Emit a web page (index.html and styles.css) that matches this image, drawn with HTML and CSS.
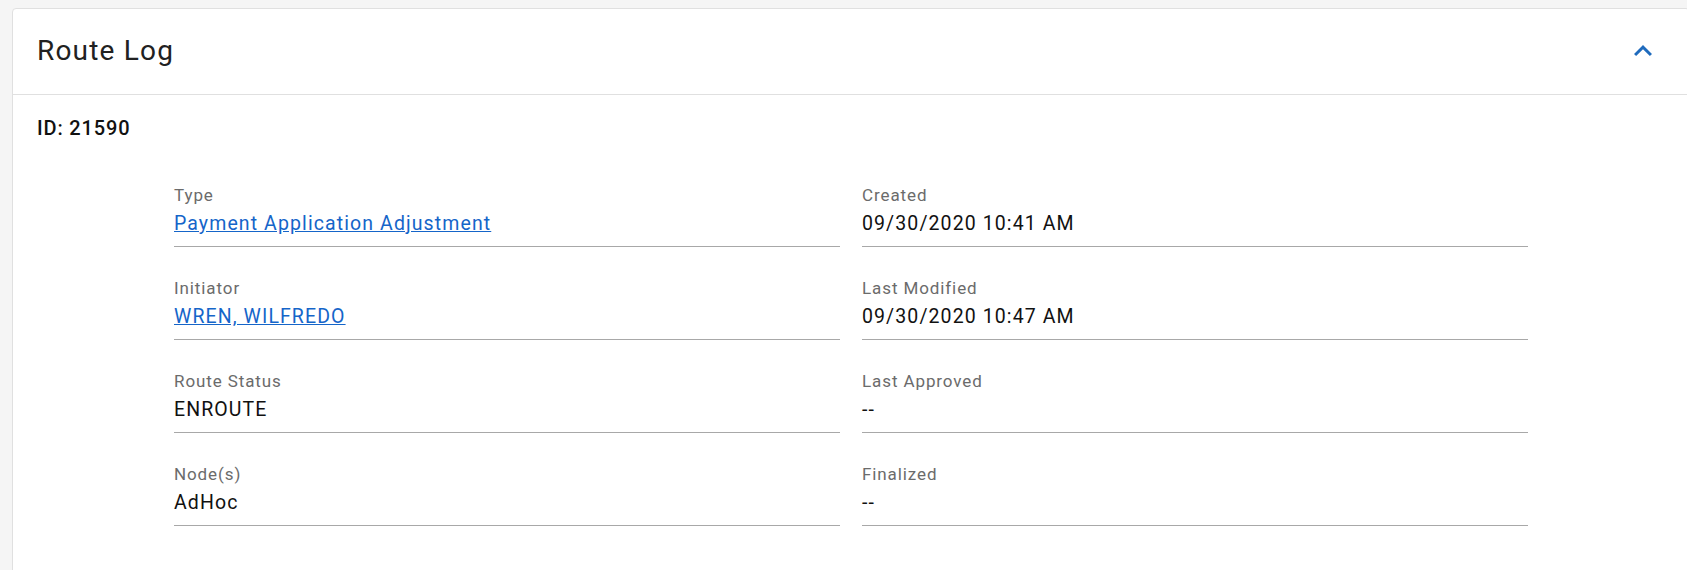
FILE: index.html
```html
<!DOCTYPE html>
<html lang="en">
<head>
    <meta charset="UTF-8">
    <meta name="viewport" content="width=device-width, initial-scale=1.0">
    <title>Route Log</title>
    <link rel="stylesheet" href="styles.css">
</head>
<body>
    <div class="card">
        <div class="card-header">
            <h2 class="card-title">Route Log</h2>
            <button class="collapse-btn" aria-label="Collapse">
                <svg viewBox="0 0 24 24" width="36" height="36">
                    <path d="M12 8l-6 6 1.41 1.41L12 10.83l4.59 4.58L18 14z"/>
                </svg>
            </button>
        </div>

        <div class="card-body">
            <div class="doc-id">ID: 21590</div>

            <div class="field-grid">
                <div class="field">
                    <div class="field-label">Type</div>
                    <div class="field-value"><a href="#">Payment Application Adjustment</a></div>
                </div>
                <div class="field">
                    <div class="field-label">Created</div>
                    <div class="field-value">09/30/2020 10:41 AM</div>
                </div>

                <div class="field">
                    <div class="field-label">Initiator</div>
                    <div class="field-value"><a href="#">WREN, WILFREDO</a></div>
                </div>
                <div class="field">
                    <div class="field-label">Last Modified</div>
                    <div class="field-value">09/30/2020 10:47 AM</div>
                </div>

                <div class="field">
                    <div class="field-label">Route Status</div>
                    <div class="field-value">ENROUTE</div>
                </div>
                <div class="field">
                    <div class="field-label">Last Approved</div>
                    <div class="field-value">--</div>
                </div>

                <div class="field">
                    <div class="field-label">Node(s)</div>
                    <div class="field-value">AdHoc</div>
                </div>
                <div class="field">
                    <div class="field-label">Finalized</div>
                    <div class="field-value">--</div>
                </div>
            </div>
        </div>
    </div>
</body>
</html>
```

FILE: styles.css
```css
body {
    font-family: Roboto, "Liberation Sans", Arial, sans-serif;
    margin: 0;
    padding: 8px 0 0 12px;
    background-color: #f5f5f5;
    overflow: hidden;
}

.card {
    background-color: #fff;
    border: 1px solid #e0e0e0;
    border-radius: 4px 4px 0 0;
    margin-right: -3px;
    min-height: 600px;
}

.card-header {
    display: flex;
    align-items: center;
    justify-content: space-between;
    padding: 24px 28px 25px 24px;
    border-bottom: 1px solid #e0e0e0;
}

.card-title {
    margin: 0;
    font-size: 28px;
    font-weight: 400;
    line-height: 36px;
    letter-spacing: 1.2px;
    color: #212121;
}

.collapse-btn {
    border: none;
    background: none;
    padding: 0;
    width: 36px;
    height: 36px;
    cursor: pointer;
}

.collapse-btn svg {
    display: block;
    fill: #1f6bbd;
}

.card-body {
    padding: 19px 24px 40px 24px;
}

.doc-id {
    font-size: 20px;
    font-weight: 500;
    line-height: 28px;
    letter-spacing: 0.85px;
    color: #111;
}

.field-grid {
    display: grid;
    grid-template-columns: 1fr 1fr;
    column-gap: 22px;
    row-gap: 28px;
    max-width: 1354px;
    margin: 40px auto 0 auto;
}

.field {
    border-bottom: 1px solid #a8a8a8;
}

.field-label {
    font-size: 17px;
    line-height: 26px;
    letter-spacing: 0.9px;
    color: #6b6b6b;
}

.field-value {
    margin-top: 2px;
    padding-bottom: 8px;
    font-size: 19.5px;
    line-height: 28px;
    letter-spacing: 1.1px;
    color: #111;
}

.field-value a {
    color: #1565c9;
    text-decoration: underline;
}
```
